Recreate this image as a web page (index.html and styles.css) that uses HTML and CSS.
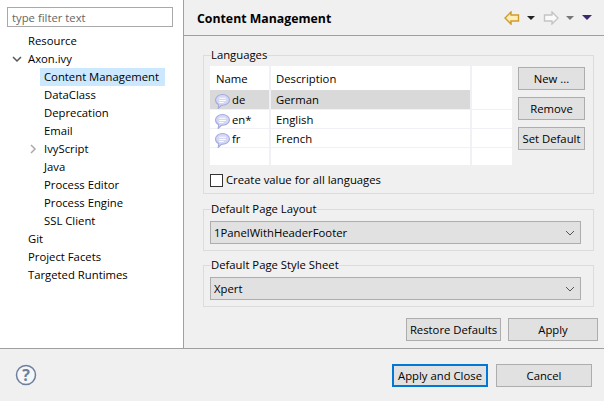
FILE: index.html
```html
<!DOCTYPE html>
<html lang="en">
<head>
  <title>Properties</title>
  <link rel="stylesheet" href="styles.css">
</head>
<body>
<div class="dialog">
  <div class="main">
    <div class="sidebar">
      <input class="filter" type="text" placeholder="type filter text">
      <ul class="tree">
        <li class="node">Resource</li>
        <li class="node"><svg class="twisty" width="10" height="10" viewBox="0 0 10 10"><path d="M1 3l4 4 4-4" fill="none" stroke="#555" stroke-width="1.5"/></svg>Axon.ivy</li>
        <li class="node child"><span class="selected">Content Management</span></li>
        <li class="node child">DataClass</li>
        <li class="node child">Deprecation</li>
        <li class="node child">Email</li>
        <li class="node child"><svg class="twisty" width="10" height="10" viewBox="0 0 10 10"><path d="M3 1l4 4-4 4" fill="none" stroke="#aaa" stroke-width="1.5"/></svg>IvyScript</li>
        <li class="node child">Java</li>
        <li class="node child">Process Editor</li>
        <li class="node child">Process Engine</li>
        <li class="node child">SSL Client</li>
        <li class="node">Git</li>
        <li class="node">Project Facets</li>
        <li class="node">Targeted Runtimes</li>
      </ul>
    </div>
    <div class="page">
      <div class="page-header">
        <h1 class="title">Content Management</h1>
        <div class="nav">
          <svg width="16" height="14" viewBox="0 0 16 14"><path d="M7 1L1 7l6 6V10h7.500V4H7z" fill="#ffedb8" stroke="#d09a28" stroke-width="1.400"/></svg>
          <span class="tri"></span>
          <svg class="nav-fwd" width="16" height="14" viewBox="0 0 16 14"><path d="M9 1l6 6-6 6V10H1.500V4H9z" fill="#fafafa" stroke="#c4c4c4" stroke-width="1.400"/></svg>
          <span class="tri off"></span>
          <span class="tri menu"></span>
        </div>
      </div>
      <div class="page-body">
        <fieldset class="group langs">
          <legend>Languages</legend>
          <div class="langs-row">
            <table class="lang-table">
              <tr class="head"><th class="c1">Name</th><th class="c2">Description</th><th class="c3"></th></tr>
              <tr class="picked">
                <td class="c1"><svg class="bubble" width="15" height="15" viewBox="1 1 14 14"><use href="#bubble"/></svg>de</td>
                <td class="c2">German</td><td class="c3"></td>
              </tr>
              <tr>
                <td class="c1"><svg class="bubble" width="15" height="15" viewBox="1 1 14 14"><use href="#bubble"/></svg>en*</td>
                <td class="c2">English</td><td class="c3"></td>
              </tr>
              <tr>
                <td class="c1"><svg class="bubble" width="15" height="15" viewBox="1 1 14 14"><use href="#bubble"/></svg>fr</td>
                <td class="c2">French</td><td class="c3"></td>
              </tr>
              <tr class="blank"><td class="c1"></td><td class="c2"></td><td class="c3"></td></tr>
            </table>
            <div class="side-btns">
              <button class="btn" type="button">New ...</button>
              <button class="btn" type="button">Remove</button>
              <button class="btn" type="button">Set Default</button>
            </div>
          </div>
          <label class="check"><span class="box"></span>Create value for all languages</label>
        </fieldset>
        <fieldset class="group">
          <legend>Default Page Layout</legend>
          <div class="combo">1PanelWithHeaderFooter<svg width="10" height="6" viewBox="0 0 10 6"><path d="M1 1l4 4 4-4" fill="none" stroke="#555"/></svg></div>
        </fieldset>
        <fieldset class="group">
          <legend>Default Page Style Sheet</legend>
          <div class="combo">Xpert<svg width="10" height="6" viewBox="0 0 10 6"><path d="M1 1l4 4 4-4" fill="none" stroke="#555"/></svg></div>
        </fieldset>
        <div class="page-btns">
          <button class="btn restore" type="button">Restore Defaults</button>
          <button class="btn apply" type="button">Apply</button>
        </div>
      </div>
    </div>
  </div>
  <div class="footer">
    <svg width="22" height="22" viewBox="0 0 22 22"><circle cx="11" cy="11" r="9.500" fill="#f4f6f8" stroke="#6c7f9c" stroke-width="1.500"/><text x="11" y="16.500" text-anchor="middle" class="help-mark">?</text></svg>
    <div class="footer-btns">
      <button class="btn primary" type="button">Apply and Close</button>
      <button class="btn cancel" type="button">Cancel</button>
    </div>
  </div>
</div>
<svg width="0" height="0" class="defs">
  <defs>
    <g id="bubble">
      <path d="M8 1.500c3.600 0 6.500 2.200 6.500 5s-2.900 5-6.500 5h-1L4 14.500l.5-3.600C2.700 10 1.500 8.400 1.500 6.500c0-2.800 2.900-5 6.500-5z" fill="#d4d8f4" stroke="#a3a9dc"/>
      <path d="M5 5h6M5 7h6M5 9h4" stroke="#fff" stroke-width="1"/>
    </g>
  </defs>
</svg>
</body>
</html>
```
FILE: styles.css
```css
html, body {
  margin: 0;
  padding: 0;
}
body {
  font-family: "Open Sans", "Liberation Sans", sans-serif;
  font-size: 11.300px;
  color: #000;
  background-color: #f0f0f0;
}
.dialog {
  width: 604px;
  height: 401px;
  display: flex;
  flex-direction: column;
  overflow: hidden;
}
.defs {
  display: block;
  height: 0;
}
.main {
  height: 349px;
  display: flex;
  border-bottom: 1px solid #a0a0a0;
  box-sizing: border-box;
}
.sidebar {
  width: 184px;
  box-sizing: border-box;
  background-color: #fff;
  border-right: 1px solid #a0a0a0;
  padding: 7px 0 0 7px;
}
.filter {
  display: block;
  width: 166px;
  height: 20px;
  box-sizing: border-box;
  border: 1px solid #a9a9a9;
  padding: 0 4px;
  font: inherit;
  outline: none;
}
.filter::placeholder {
  color: #666;
  opacity: 1;
}
.tree {
  list-style: none;
  margin: 5px 0 0;
  padding: 0;
}
.node {
  height: 18px;
  line-height: 18px;
  padding-left: 21px;
  position: relative;
  white-space: nowrap;
}
.child {
  padding-left: 37px;
}
.selected {
  display: inline-block;
  background-color: #cce8ff;
  margin-left: -4px;
  padding: 0 4px;
  width: 117px;
}
.twisty {
  position: absolute;
  left: 5px;
  top: 4px;
}
.child .twisty {
  left: 21px;
}
.page {
  flex: 1;
  display: flex;
  flex-direction: column;
}
.page-header {
  height: 36px;
  box-sizing: border-box;
  border-bottom: 1px solid #a0a0a0;
  display: flex;
  align-items: center;
  justify-content: space-between;
  padding: 2px 12px 0 13px;
}
.title {
  margin: 0;
  font-size: 12.300px;
  font-weight: bold;
}
.nav {
  display: flex;
  align-items: center;
  margin-top: -2px;
}
.tri {
  width: 0;
  height: 0;
  border-left: 4px solid transparent;
  border-right: 4px solid transparent;
  border-top: 4px solid #222;
  margin-left: 7px;
}
.tri.off {
  border-top-color: #777;
}
.tri.menu {
  border-left-width: 5px;
  border-right-width: 5px;
  border-top: 5px solid #3c2a6e;
  margin-left: 8px;
}
.nav-fwd {
  margin-left: 8px;
}
.page-body {
  padding: 11px 10px 0 19px;
  flex: 1;
}
.group {
  margin: 0 0 6px;
  padding: 4px 12px 6px 6px;
  border: 1px solid #dcdcdc;
  min-width: 0;
  width: 391px;
  box-sizing: border-box;
}
.langs {
  padding-top: 3px;
  margin-bottom: 7px;
}
.group legend {
  padding: 0;
  margin-left: 1px;
  line-height: 16px;
  height: 16px;
}
.langs-row {
  display: flex;
  align-items: flex-start;
  gap: 6px;
}
.lang-table {
  width: 302px;
  height: 99px;
  border-collapse: collapse;
  background-color: #fff;
  table-layout: fixed;
}
.lang-table th, .lang-table td {
  padding: 2px 0 0;
  height: 19px;
  box-sizing: border-box;
  line-height: 16px;
  border-right: 2px solid #f0f0f5;
  border-bottom: 1px solid #f0f0f5;
  font-weight: normal;
  text-align: left;
  white-space: nowrap;
}
.lang-table .head th {
  height: 24px;
  border-bottom: 0;
}
.lang-table .blank td {
  height: 18px;
  border-bottom: 0;
}
.lang-table .head .c1 {
  padding-left: 6px;
}
.lang-table .c1 {
  width: 60px;
}
.lang-table .c2 {
  width: 201px;
  padding-left: 5px;
}
.lang-table .c3 {
  width: 41px;
  border-right: 0;
}
.picked .c1, .picked .c2 {
  background-color: #d9d9d9;
}
.bubble {
  vertical-align: -2px;
  margin: -3px 2px -3px 5px;
}
.side-btns {
  display: flex;
  flex-direction: column;
  gap: 7px;
  padding-top: 1px;
}
.btn {
  height: 23px;
  box-sizing: border-box;
  background-color: #e1e1e1;
  border: 1px solid #adadad;
  border-radius: 0;
  padding: 0;
  font: inherit;
  color: #000;
}
.side-btns .btn {
  width: 67px;
}
.check {
  display: flex;
  align-items: center;
  margin-top: 8px;
  height: 14px;
  line-height: 14px;
}
.box {
  width: 13px;
  height: 13px;
  box-sizing: border-box;
  background-color: #fff;
  border: 1px solid #333;
  margin-right: 3px;
}
.combo {
  height: 23px;
  box-sizing: border-box;
  width: 371px;
  background-color: #e1e1e1;
  border: 1px solid #adadad;
  padding: 0 4px 0 3px;
  display: flex;
  align-items: center;
  justify-content: space-between;
}
.combo svg {
  margin-right: 1px;
}
.page-btns {
  display: flex;
  justify-content: flex-end;
  gap: 7px;
  margin-top: 11px;
  margin-right: -4px;
}
.restore {
  width: 95px;
}
.apply {
  width: 90px;
}
.footer {
  flex: 1;
  display: flex;
  align-items: center;
  justify-content: space-between;
  padding: 0 12px 0 15px;
}
.footer-btns {
  display: flex;
  gap: 8px;
}
.footer .btn {
  width: 96px;
}
.primary {
  border: 2px solid #0078d7;
}
.help-mark {
  font-family: "Open Sans", sans-serif;
  font-size: 16px;
  font-weight: bold;
  fill: #6c7f9c;
}
```
